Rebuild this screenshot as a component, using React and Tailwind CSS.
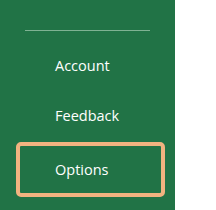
export default function App() {
  return (
    <div className="flex w-[216px] h-[210px] bg-white" style={{ fontFamily: '"Open Sans", "Noto Sans", sans-serif' }}>
      <div className="w-[175px] h-full bg-[#217346] flex flex-col">
        <div className="mt-[30px] ml-[25px] w-[125px] h-px bg-[#7fb293]" />
        <div className="mt-[25px] ml-[55px] text-[14.5px] leading-[20px] text-white">Account</div>
        <div className="mt-[30px] ml-[55px] text-[14.5px] leading-[20px] text-white">Feedback</div>
        <div className="mt-[16px] ml-[16px] w-[149px] h-[55px] border-[4px] border-[#f2b380] rounded-[5px] flex items-center pl-[35px] text-[14.5px] text-white">
          Options
        </div>
      </div>
      <div className="flex-1" />
    </div>
  );
}
